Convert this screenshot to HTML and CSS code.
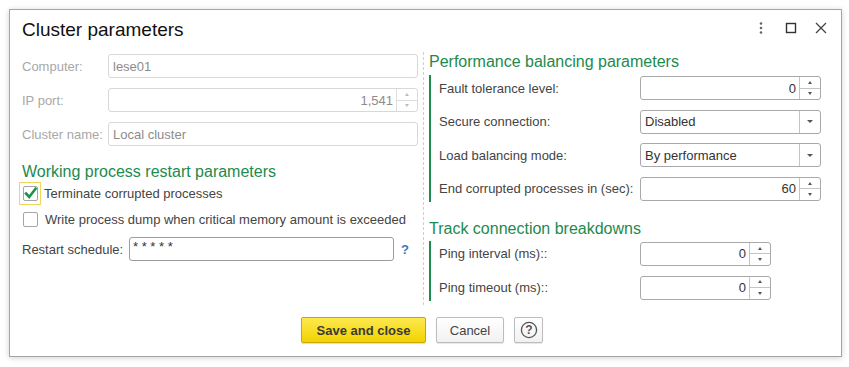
FILE: index.html
```html
<!DOCTYPE html>
<html>
<head>
<meta charset="utf-8">
<link rel="stylesheet" href="styles.css">
</head>
<body>
<div class="dialog">
  <div class="header">
    <div class="title">Cluster parameters</div>
    <div class="hicons">
      <svg class="hicon" width="14" height="14" viewBox="0 0 14 14"><circle cx="7" cy="2.5" r="1.3" fill="#666"/><circle cx="7" cy="7" r="1.3" fill="#666"/><circle cx="7" cy="11.5" r="1.3" fill="#666"/></svg>
      <svg class="hicon" width="14" height="14" viewBox="0 0 14 14"><rect x="2.5" y="2.5" width="9" height="9" fill="none" stroke="#333" stroke-width="1.4"/></svg>
      <svg class="hicon" width="14" height="14" viewBox="0 0 14 14"><path d="M2 2 L12 12 M12 2 L2 12" stroke="#444" stroke-width="1.3"/></svg>
    </div>
  </div>
  <div class="content">
    <div class="left">
      <div class="frow">
        <span class="lbl dis">Computer:</span>
        <div class="inp dinp wide"><span class="val">lese01</span></div>
      </div>
      <div class="frow">
        <span class="lbl dis">IP port:</span>
        <div class="inp dinp wide"><span class="val num">1,541</span><span class="spin dspin"><span class="up"></span><span class="dn"></span></span></div>
      </div>
      <div class="frow">
        <span class="lbl dis">Cluster name:</span>
        <div class="inp dinp wide"><span class="val dark">Local cluster</span></div>
      </div>
      <div class="heading h1">Working process restart parameters</div>
      <div class="cbrow first">
        <span class="focus"><span class="cb"><svg width="15" height="15" viewBox="0 0 15 15"><path d="M3 7.5 L6.2 11 L12.5 2.8" fill="none" stroke="#1e9150" stroke-width="2.6" stroke-linecap="square"/></svg></span></span>
        <span class="cbl">Terminate corrupted processes</span>
      </div>
      <div class="cbrow second">
        <span class="cb"></span>
        <span class="cbl">Write process dump when critical memory amount is exceeded</span>
      </div>
      <div class="srow">
        <span class="slbl">Restart schedule:</span>
        <div class="inp sinp"><span class="val stars">* * * * *</span></div>
        <span class="q">?</span>
      </div>
    </div>
    <div class="sep"></div>
    <div class="right">
      <div class="heading">Performance balancing parameters</div>
      <div class="group g1">
        <div class="rrow">
          <span class="rlbl">Fault tolerance level:</span>
          <div class="inp rinp"><span class="val num">0</span><span class="spin"><span class="up"></span><span class="dn"></span></span></div>
        </div>
        <div class="rrow">
          <span class="rlbl">Secure connection:</span>
          <div class="inp rinp"><span class="val">Disabled</span><span class="dd"><span class="tri"></span></span></div>
        </div>
        <div class="rrow">
          <span class="rlbl">Load balancing mode:</span>
          <div class="inp rinp"><span class="val">By performance</span><span class="dd"><span class="tri"></span></span></div>
        </div>
        <div class="rrow">
          <span class="rlbl">End corrupted processes in (sec):</span>
          <div class="inp rinp"><span class="val num">60</span><span class="spin"><span class="up"></span><span class="dn"></span></span></div>
        </div>
      </div>
      <div class="heading h2">Track connection breakdowns</div>
      <div class="group g2">
        <div class="rrow">
          <span class="rlbl">Ping interval (ms)::</span>
          <div class="inp pinp"><span class="val num">0</span><span class="spin"><span class="up"></span><span class="dn"></span></span></div>
        </div>
        <div class="rrow">
          <span class="rlbl">Ping timeout (ms)::</span>
          <div class="inp pinp"><span class="val num">0</span><span class="spin"><span class="up"></span><span class="dn"></span></span></div>
        </div>
      </div>
    </div>
  </div>
  <div class="buttons">
    <button class="btn save">Save and close</button>
    <button class="btn cancel">Cancel</button>
    <button class="btn help"><svg width="18" height="18" viewBox="0 0 18 18"><circle cx="9" cy="9" r="7.6" fill="none" stroke="#555" stroke-width="1.3"/><text x="9" y="13.2" text-anchor="middle" font-family="Liberation Sans, Arial, sans-serif" font-size="12" font-weight="bold" fill="#555">?</text></svg></button>
  </div>
</div>
</body>
</html>
```

FILE: styles.css
```css
* { box-sizing: border-box; }
html, body { margin: 0; padding: 0; background: #fff; }
body {
  font-family: "Liberation Sans", Arial, sans-serif;
  font-size: 13px;
  color: #4a4a4a;
  width: 849px;
  height: 367px;
  overflow: hidden;
  padding: 9px 0 0 9px;
}
.dialog {
  width: 833px;
  height: 348px;
  border: 1px solid #a5a5a5;
  background: #fff;
  box-shadow: 0 1px 6px rgba(0,0,0,0.18);
  padding: 0 19px 0 12px;
  display: flex;
  flex-direction: column;
}
.header {
  height: 42px;
  display: flex;
  align-items: flex-start;
  justify-content: space-between;
  padding-top: 9px;
}
.title {
  font-size: 19px;
  line-height: 22px;
  color: #111;
}
.hicons {
  display: flex;
  gap: 16px;
  margin-top: 2px;
  margin-right: -6px;
}
.hicon { display: block; }
.content {
  display: flex;
  height: 253px;
}
.left {
  width: 396px;
  padding-top: 2px;
  display: flex;
  flex-direction: column;
}
.sep {
  margin-left: 5px;
  margin-right: 5px;
  border-left: 1px dashed #cfcfcf;
}
.right {
  width: 392px;
  display: flex;
  flex-direction: column;
}
.frow {
  display: flex;
  align-items: center;
  height: 24px;
  margin-bottom: 10px;
}
.lbl { width: 86px; }
.dis { color: #a8a8a8; }
.inp {
  height: 24px;
  border: 1px solid #a9a9a9;
  border-radius: 3px;
  display: flex;
  align-items: center;
  background: #fff;
}
.dinp { border-color: #d8d8d8; color: #8c8c8c; }
.wide { width: 310px; }
.val {
  flex: 1;
  padding: 0 4px;
  white-space: nowrap;
  overflow: hidden;
}
.val.num { text-align: right; padding-right: 3px; }
.dark { color: #777; }
.dinp .val { color: #8c8c8c; }
.spin {
  width: 21px;
  height: 100%;
  border-left: 1px solid #c4c4c4;
  display: flex;
  flex-direction: column;
}
.dspin { border-left-color: #dedede; }
.spin .up, .spin .dn {
  flex: 1;
  display: flex;
  align-items: center;
  justify-content: center;
}
.spin .up { border-bottom: 1px solid #c4c4c4; }
.dspin .up { border-bottom-color: #dedede; }
.spin .up::after {
  content: "";
  border-left: 2px solid transparent;
  border-right: 2px solid transparent;
  border-bottom: 3px solid #555;
}
.spin .dn::after {
  content: "";
  border-left: 2px solid transparent;
  border-right: 2px solid transparent;
  border-top: 3px solid #555;
}
.dspin .up::after { border-bottom-color: #bbb; }
.dspin .dn::after { border-top-color: #bbb; }
.dd {
  width: 21px;
  height: 100%;
  border-left: 1px solid #c4c4c4;
  display: flex;
  align-items: center;
  justify-content: center;
}
.tri {
  border-left: 3px solid transparent;
  border-right: 3px solid transparent;
  border-top: 3px solid #555;
}
.heading {
  font-size: 16px;
  line-height: 20px;
  color: #1d8a4e;
  white-space: nowrap;
}
.h1 { margin-top: 6px; }
.cbrow {
  display: flex;
  align-items: center;
}
.cbrow.first { height: 23px; margin-left: -3px; }
.focus {
  width: 22px;
  height: 23px;
  border: 1px solid #eed75a;
  display: flex;
  align-items: center;
  justify-content: center;
  margin-right: 3px;
}
.cb {
  width: 15px;
  height: 15px;
  border: 1px solid #a5a5a5;
  border-radius: 2px;
  background: #fff;
  display: block;
  position: relative;
}
.cb svg { position: absolute; left: -1px; top: -1px; }
.cbrow.second { margin-top: 6px; height: 17px; margin-left: 1px; }
.cbrow.second .cb { margin-right: 7px; }
.cbl { color: #444; white-space: nowrap; }
.srow {
  display: flex;
  align-items: center;
  height: 24px;
  margin-top: 9px;
}
.slbl { width: 107px; color: #444; }
.sinp { width: 265px; border-color: #9c9c9c; }
.stars { padding-left: 3px; position: relative; top: -3px; color: #333; }
.q {
  margin-left: 7px;
  color: #3a78c0;
  font-weight: bold;
  font-size: 13px;
}
.group {
  border-left: 2px solid #1d8a4e;
  padding: 1px 0 1px 8px;
  display: flex;
  flex-direction: column;
  gap: 9.67px;
}
.g1 { margin-top: 3px; }
.h2 { margin-top: 17px; }
.g2 { margin-top: 2px; }
.rrow {
  display: flex;
  align-items: center;
  height: 24px;
}
.rlbl { width: 201px; color: #444; white-space: nowrap; }
.rinp { width: 181px; color: #333; }
.pinp { width: 131px; color: #333; }
.buttons {
  display: flex;
  justify-content: center;
  gap: 10px;
  margin-top: 12px;
}
.btn {
  height: 26px;
  font-family: "Liberation Sans", Arial, sans-serif;
  font-size: 13px;
  border-radius: 2px;
  padding: 0;
  cursor: default;
}
.save {
  width: 125px;
  font-weight: bold;
  color: #3a3a3a;
  border: 1px solid #c9a800;
  background: linear-gradient(#fde94e, #f3d200);
  box-shadow: 0 1px 1px rgba(0,0,0,0.15);
}
.cancel {
  width: 68px;
  color: #444;
  border: 1px solid #bcbcbc;
  background: linear-gradient(#ffffff, #f1f1f1);
  box-shadow: 0 1px 1px rgba(0,0,0,0.1);
}
.help {
  width: 29px;
  border: 1px solid #bcbcbc;
  background: linear-gradient(#ffffff, #f1f1f1);
  display: flex;
  align-items: center;
  justify-content: center;
  box-shadow: 0 1px 1px rgba(0,0,0,0.1);
}
.help svg { display: block; }
```
